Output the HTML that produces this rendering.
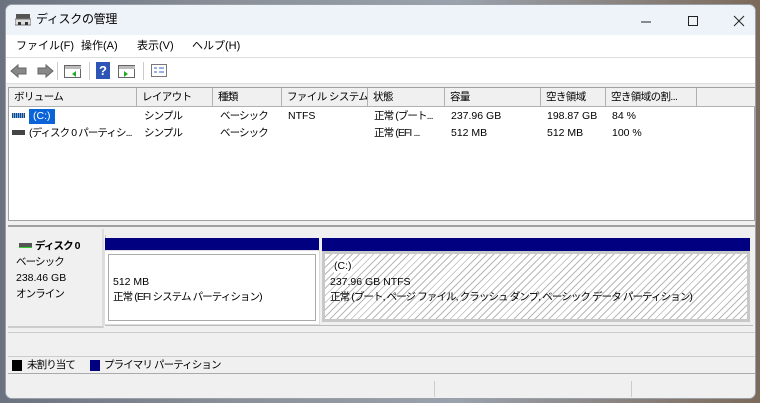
<!DOCTYPE html>
<html><head><meta charset="utf-8"><style>
*{margin:0;padding:0;box-sizing:border-box}
body{width:760px;height:403px;overflow:hidden;background:linear-gradient(90deg,#6b7280,#8a8f98 30%,#9aa2ad 60%,#7c6a5a);font-family:"Liberation Sans","Noto Sans CJK JP",sans-serif;font-size:10.5px;line-height:13px;color:#000;position:relative}
.j{letter-spacing:-0.9px}
.win{position:absolute;left:5px;top:4px;width:751px;height:395px;background:#f0f0f0;border:1px solid #9aa0a8;border-radius:7px;overflow:hidden}
.title{position:absolute;left:0;top:0;width:100%;height:30px;background:#eef3f9}
.title .t{position:absolute;left:30px;top:8px;font-size:12px;letter-spacing:-0.3px}
.menu{position:absolute;top:30px;left:0;width:100%;height:23px;background:#fff;border-bottom:1px solid #ddd}
.menu span{position:absolute;top:5px;font-size:11px}
.tb{position:absolute;top:53px;left:0;width:100%;height:26px;background:#fff;border-bottom:1px solid #ddd}
.abs{position:absolute}
.list{position:absolute;left:2px;top:82px;width:747px;height:134px;background:#fff;border:1px solid #a0a0a0}
.hdr{position:absolute;top:0;height:19px;background:#f0f0f0;border-right:1px solid #b0b0b0;border-bottom:1px solid #b0b0b0;padding:3px 0 0 5px;white-space:nowrap;overflow:hidden;letter-spacing:-0.6px}
.cell{position:absolute;white-space:nowrap}
.lower{position:absolute;left:2px;top:220px;width:747px;height:132px;border-top:2px solid #a0a0a0;background:#f0f0f0}
.hatch{background:repeating-linear-gradient(135deg,#fff 0 4px,#b8b8b8 4px 5px)}
</style></head><body>
<div class="win">
<div class="title">
<svg class="abs" style="left:9px;top:9px" width="16" height="12"><rect x="1" y="0" width="14" height="5" fill="#555"/><rect x="0" y="5" width="16" height="6" fill="#ddd" stroke="#777"/><rect x="3" y="8" width="3" height="3" fill="#333"/><rect x="10" y="8" width="3" height="3" fill="#333"/></svg>
<div class="t">ディスクの管理</div>
<svg class="abs" style="left:630px;top:9px" width="120" height="14" stroke="#222" fill="none"><line x1="5" y1="8" x2="15" y2="8"/><rect x="52.5" y="2.5" width="9" height="9"/><path d="M98 2l10 10M108 2l-10 10"/></svg>
</div>
<div class="menu"><span style="left:10px">ファイル(F)</span><span style="left:75px">操作(A)</span><span style="left:131px">表示(V)</span><span style="left:186px">ヘルプ(H)</span></div>
<div class="tb">
<svg class="abs" style="left:4px;top:5px" width="44" height="16"><path d="M1 8l7-6v3h8v6H8v3z" fill="#888" stroke="#666"/><path d="M43 8l-7-6v3h-8v6h8v3z" fill="#888" stroke="#666"/></svg>
<div class="abs" style="left:51px;top:4px;width:1px;height:18px;background:#ccc"></div>
<svg class="abs" style="left:58px;top:7px" width="18" height="14"><rect x=".5" y=".5" width="16" height="12" fill="#fff" stroke="#666"/><rect x="1" y="1" width="16" height="3" fill="#bbb"/><path d="M12 6l-4 3 4 3z" fill="#2a2"/></svg>
<div class="abs" style="left:83px;top:4px;width:1px;height:18px;background:#ccc"></div>
<div class="abs" style="left:90px;top:4px;width:14px;height:17px;background:#2d55b5;color:#fff;font-weight:bold;font-size:13px;text-align:center;line-height:17px">?</div>
<svg class="abs" style="left:112px;top:7px" width="18" height="14"><rect x=".5" y=".5" width="16" height="12" fill="#fff" stroke="#666"/><rect x="1" y="1" width="16" height="3" fill="#bbb"/><path d="M6 6l4 3-4 3z" fill="#2a2"/></svg>
<div class="abs" style="left:137px;top:4px;width:1px;height:18px;background:#ccc"></div>
<svg class="abs" style="left:145px;top:6px" width="17" height="14"><rect x=".5" y=".5" width="15" height="12" fill="#fff" stroke="#777"/><path d="M3 4h3M8 4h5M3 8h3M8 8h5" stroke="#36c"/></svg>
</div>
<div class="list">
<div class="hdr" style="left:0;width:128px">ボリューム</div>
<div class="hdr" style="left:128px;width:76px">レイアウト</div>
<div class="hdr" style="left:204px;width:69px">種類</div>
<div class="hdr" style="left:273px;width:86px">ファイル システム</div>
<div class="hdr" style="left:359px;width:77px">状態</div>
<div class="hdr" style="left:436px;width:96px">容量</div>
<div class="hdr" style="left:532px;width:65px">空き領域</div>
<div class="hdr" style="left:597px;width:91px">空き領域の割...</div>
<div class="hdr" style="left:688px;width:59px"></div>
<div class="abs" style="left:3px;top:25px;width:13px;height:5px;background:repeating-linear-gradient(90deg,#246 0 1px,#6af 1px 2px)"></div>
<div class="cell" style="left:20px;top:21px;background:#0a64d8;color:#fff;padding:1px 4px">(C:)</div>
<div class="cell j" style="left:135px;top:22px">シンプル</div><div class="cell j" style="left:211px;top:22px">ベーシック</div><div class="cell" style="left:279px;top:22px">NTFS</div><div class="cell j" style="left:365px;top:22px">正常 (ブート...</div><div class="cell" style="left:442px;top:22px">237.96 GB</div><div class="cell" style="left:538px;top:22px">198.87 GB</div><div class="cell" style="left:603px;top:22px">84 %</div>
<div class="abs" style="left:3px;top:42px;width:13px;height:5px;background:#444"></div>
<div class="cell j" style="left:20px;top:39px">(ディスク 0 パーティシ...</div>
<div class="cell j" style="left:135px;top:39px">シンプル</div><div class="cell j" style="left:211px;top:39px">ベーシック</div><div class="cell j" style="left:365px;top:39px">正常 (EFI ...</div><div class="cell" style="left:442px;top:39px">512 MB</div><div class="cell" style="left:538px;top:39px">512 MB</div><div class="cell" style="left:603px;top:39px">100 %</div>
</div>
<div class="lower">
<div class="abs" style="left:0;top:2px;width:96px;height:99px;background:#f0f0f0;border-right:2px solid #ddd;border-bottom:2px solid #ccc"></div>
<div class="abs" style="left:11px;top:16px;width:13px;height:5px;background:#555;border-bottom:1px solid #3c3"></div>
<div class="cell j" style="left:27px;top:13px;font-weight:bold">ディスク 0</div>
<div class="cell j" style="left:8px;top:29px">ベーシック</div>
<div class="cell" style="left:8px;top:45px">238.46 GB</div>
<div class="cell j" style="left:8px;top:61px">オンライン</div>
<div class="abs" style="left:97px;top:8px;width:648px;height:91px;border-left:1px solid #ccc;border-bottom:1px solid #bbb"></div>
<div class="abs" style="left:97px;top:11px;width:214px;height:13px;background:#000080"></div>
<div class="abs" style="left:97px;top:24px;width:214px;height:73px;background:#fff;border:3px solid #fff;outline:1px solid #ddd"><div style="position:absolute;inset:0;border:1px solid #aaa"></div></div>
<div class="cell" style="left:105px;top:49px">512 MB</div>
<div class="cell j" style="left:105px;top:64px">正常 (EFI システム パーティション)</div>
<div class="abs" style="left:314px;top:11px;width:428px;height:13px;background:#000080"></div>
<div class="abs hatch" style="left:314px;top:24px;width:428px;height:71px;border:3px solid #c8c8c8"></div>
<div class="cell" style="left:326px;top:33px;background:#fff">(C:)</div>
<div class="cell" style="left:322px;top:49px">237.96 GB NTFS</div>
<div class="cell j" style="left:322px;top:64px">正常 (ブート, ページ ファイル, クラッシュ ダンプ, ベーシック データ パーティション)</div>
<div class="abs" style="left:0;top:105px;width:747px;height:1px;background:#ccc"></div>
<div class="abs" style="left:0;top:129px;width:747px;height:18px;border-top:1px solid #ccc;border-bottom:1px solid #aaa;background:#f0f0f0"></div>
<div class="abs" style="left:4px;top:133px;width:10px;height:11px;background:#000"></div>
<div class="cell j" style="left:19px;top:132px">未割り当て</div>
<div class="abs" style="left:82px;top:133px;width:10px;height:11px;background:#000080"></div>
<div class="cell j" style="left:96px;top:132px">プライマリ パーティション</div>
</div>
<div class="abs" style="left:0;top:373px;width:751px;height:22px;background:#f0f0f0"></div>
<div class="abs" style="left:428px;top:376px;width:1px;height:16px;background:#ccc"></div>
<div class="abs" style="left:625px;top:376px;width:1px;height:16px;background:#ccc"></div>
</div>
</body></html>
